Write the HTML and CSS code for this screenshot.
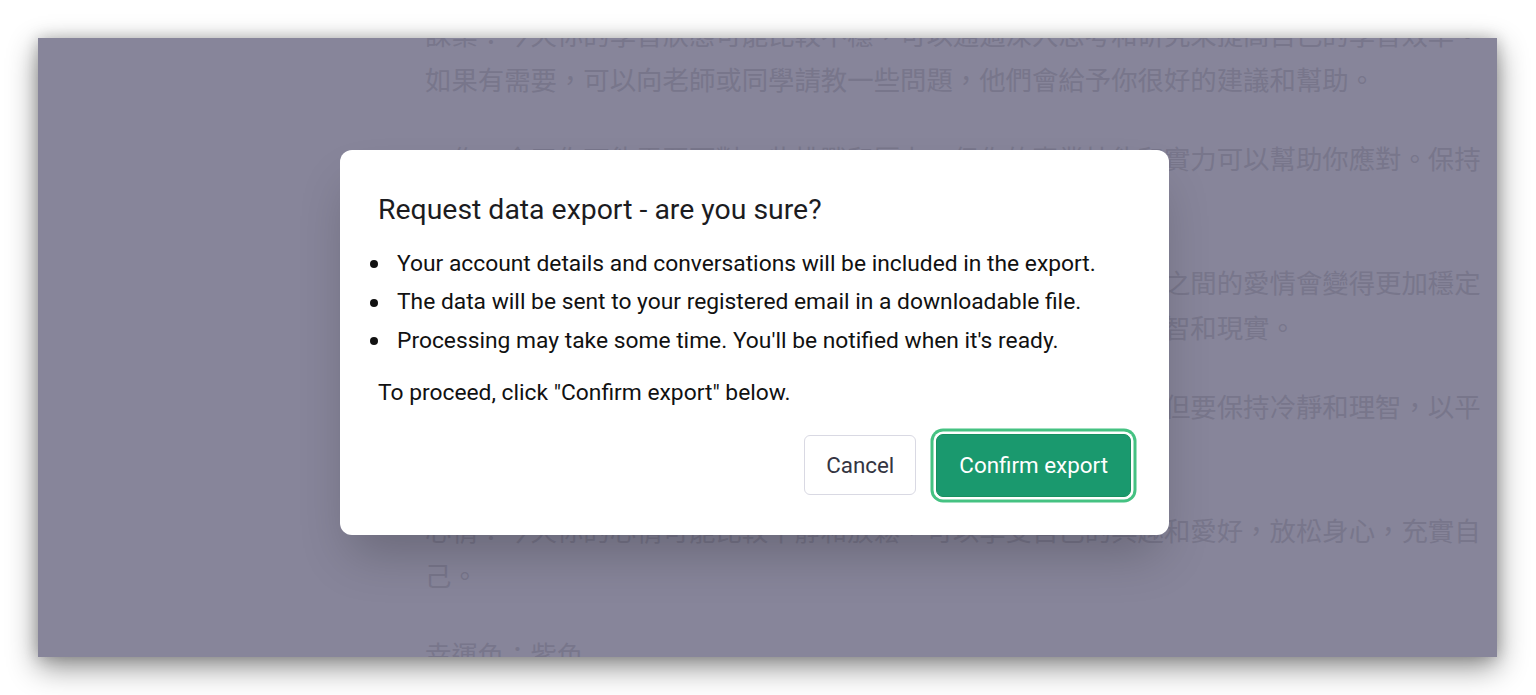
FILE: index.html
```html
<!DOCTYPE html>
<html lang="en">
<head>
    <meta charset="UTF-8">
    <meta name="viewport" content="width=device-width, initial-scale=1.0">
    <title>Request data export</title>
    <link rel="stylesheet" href="styles.css">
</head>
<body>
    <div class="window">
        <article class="reading" lang="zh-Hant">
            <p>課業：今天你的學習狀態可能比較不穩，可以通過深入思考和研究來提高自己的學習效率。如果有需要，可以向老師或同學請教一些問題，他們會給予你很好的建議和幫助。</p>
            <p>工作：今天你可能需要面對一些挑戰和壓力，但你的專業技能和實力可以幫助你應對。保持積極的態度和良好的溝通，可以讓你獲得更好的成果。</p>
            <p>愛情：單身的人有機會遇到心儀的對象，已有伴侶的人與另一半之間的愛情會變得更加穩定和甜蜜。不過也要多注意保持溝通和互相理解，在感情中保持理智和現實。</p>
            <p>財運：今天你的財運比較平穩，可能會有一些意外的投資機會，但要保持冷靜和理智，以平衡收支，避免衝動消費。</p>
            <p>心情：今天你的心情可能比較平靜和放鬆，可以享受自己的興趣和愛好，放松身心，充實自己。</p>
            <p>幸運色：紫色</p>
        </article>

        <div class="modal-layer">
            <div class="modal" role="dialog" aria-labelledby="export-title">
                <h2 id="export-title">Request data export - are you sure?</h2>
                <ul class="notes">
                    <li>Your account details and conversations will be included in the export.</li>
                    <li>The data will be sent to your registered email in a downloadable file.</li>
                    <li>Processing may take some time. You'll be notified when it's ready.</li>
                </ul>
                <p class="hint">To proceed, click "Confirm export" below.</p>
                <div class="actions">
                    <button class="btn btn-neutral">Cancel</button>
                    <button class="btn btn-primary">Confirm export</button>
                </div>
            </div>
        </div>
    </div>
</body>
</html>
```

FILE: styles.css
```css
body {
    margin: 0;
    padding: 38px 39px 38px 38px;
    background-color: #ffffff;
    font-family: Roboto, "Liberation Sans", Arial, sans-serif;
}

.window {
    position: relative;
    height: 619px;
    overflow: hidden;
    background-color: #87859a;
    box-shadow: 0 10px 28px rgba(0, 0, 0, 0.45), 0 0 14px rgba(0, 0, 0, 0.2);
}

.reading {
    width: 1058px;
    margin: -27px 0 0 387px;
    font-family: "Noto Sans CJK TC", "Noto Sans CJK SC", sans-serif;
    font-size: 26.4px;
    line-height: 45px;
    color: #78768b;
}
.reading p {
    margin: 0 0 34px;
}

.modal-layer {
    position: absolute;
    inset: 0;
    display: flex;
    align-items: flex-start;
    padding: 112px 0 0 302px;
}

.modal {
    width: 829px;
    box-sizing: border-box;
    padding: 38px;
    background-color: #ffffff;
    border-radius: 12px;
    box-shadow: 0 28px 50px -10px rgba(0, 0, 0, 0.22);
    color: #111111;
}

.modal h2 {
    margin: 0;
    font-size: 28.4px;
    font-weight: 400;
    line-height: 44px;
    color: #1c1c1f;
}

.notes {
    list-style: none;
    margin: 13px 0 0;
    padding: 0;
}
.notes li {
    display: flex;
    align-items: center;
    gap: 19px;
    margin-left: -8px;
    font-size: 22.8px;
    line-height: 38.4px;
}
.notes li::before {
    content: "";
    flex-shrink: 0;
    width: 8px;
    height: 8px;
    border-radius: 50%;
    background-color: #111111;
}

.hint {
    margin: 14px 0 0;
    font-size: 22.8px;
    line-height: 38.4px;
}

.actions {
    display: flex;
    justify-content: flex-end;
    align-items: center;
    gap: 20px;
    margin-top: 21px;
}

.btn {
    font-family: inherit;
    font-size: 22.4px;
    border-radius: 6px;
    cursor: pointer;
}
.btn-neutral {
    height: 60px;
    padding: 0 21px;
    background-color: #ffffff;
    border: 1px solid #d9d9e3;
    color: #343541;
}
.btn-primary {
    height: 63px;
    padding: 0 22px;
    background-color: #1a996e;
    border: 1px solid #17905f;
    border-radius: 7px;
    color: #ffffff;
    box-shadow: 0 0 0 2.5px #ffffff, 0 0 0 5.5px #45c282;
}
```
